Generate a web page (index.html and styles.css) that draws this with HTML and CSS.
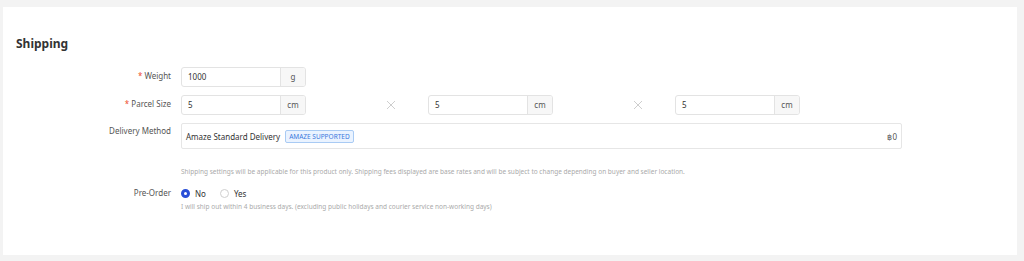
FILE: index.html
```html
<!DOCTYPE html>
<html>
<head>
<meta charset="utf-8">
<link rel="stylesheet" href="styles.css">
</head>
<body>
<div class="card">
  <h2 class="title">Shipping</h2>
  <div class="row">
    <div class="label"><span class="req">*</span> Weight</div>
    <div class="control">
      <div class="input"><span class="value">1000</span><span class="addon">g</span></div>
    </div>
  </div>
  <div class="row">
    <div class="label"><span class="req">*</span> Parcel Size</div>
    <div class="control dims">
      <div class="input"><span class="value">5</span><span class="addon">cm</span></div>
      <svg class="times" viewBox="0 0 10 10" width="10" height="10"><path d="M1 1L9 9M9 1L1 9" stroke="#c8c8c8" stroke-width="0.9" fill="none"/></svg>
      <div class="input"><span class="value">5</span><span class="addon">cm</span></div>
      <svg class="times" viewBox="0 0 10 10" width="10" height="10"><path d="M1 1L9 9M9 1L1 9" stroke="#c8c8c8" stroke-width="0.9" fill="none"/></svg>
      <div class="input"><span class="value">5</span><span class="addon">cm</span></div>
    </div>
  </div>
  <div class="row">
    <div class="label label-top">Delivery Method</div>
    <div class="control">
      <div class="delivery">
        <span class="dname">Amaze Standard Delivery</span>
        <span class="badge">AMAZE SUPPORTED</span>
        <span class="price">฿0</span>
      </div>
    </div>
  </div>
  <div class="row">
    <div class="label"></div>
    <div class="control help">Shipping settings will be applicable for this product only. Shipping fees displayed are base rates and will be subject to change depending on buyer and seller location.</div>
  </div>
  <div class="row preorder">
    <div class="label">Pre-Order</div>
    <div class="control">
      <div class="radios">
        <label class="radio"><span class="dot checked"></span>No</label>
        <label class="radio"><span class="dot"></span>Yes</label>
      </div>
      <div class="note">I will ship out within 4 business days. (excluding public holidays and courier service non-working days)</div>
    </div>
  </div>
</div>
</body>
</html>
```

FILE: styles.css
```css
html, body {
  margin: 0;
  padding: 0;
}
body {
  background: #f3f3f3;
  font-family: "Noto Sans", "Open Sans", sans-serif;
  color: #333;
  width: 1024px;
  height: 261px;
  overflow: hidden;
}
.card {
  background: #fff;
  margin: 7px 7px 0 3px;
  height: 248px;
  box-sizing: border-box;
  padding: 28px 13px 0 13px;
}
.title {
  margin: 0 0 14px 0;
  font-size: 12px;
  line-height: 18px;
  font-weight: 700;
  color: #333;
}
.row {
  display: flex;
  align-items: flex-start;
  margin-bottom: 8px;
}
.label {
  width: 165px;
  flex: none;
  box-sizing: border-box;
  padding-right: 10px;
  text-align: right;
  font-size: 8px;
  line-height: 18px;
  color: #555;
}
.label-top {
  line-height: 16px;
}
.req {
  color: #ee4d2d;
}
.control {
  flex: none;
}
.dims {
  display: flex;
  align-items: center;
}
.times {
  margin: 0 32px 0 80px;
}
.input {
  display: flex;
  width: 125px;
  height: 20px;
  box-sizing: border-box;
  border: 1px solid #e3e3e3;
  border-radius: 3px;
  overflow: hidden;
  font-size: 8px;
  line-height: 18px;
}
.value {
  flex: 1;
  padding-left: 6px;
  color: #333;
}
.addon {
  width: 24px;
  text-align: center;
  background: #f7f7f7;
  border-left: 1px solid #e3e3e3;
  color: #555;
}
.delivery {
  display: flex;
  align-items: center;
  width: 721px;
  height: 26px;
  box-sizing: border-box;
  border: 1px solid #e6e6e6;
  border-radius: 2px;
  padding: 0 4px 0 4px;
  font-size: 8px;
  color: #333;
}
.badge {
  margin-left: 5px;
  font-size: 6.5px;
  line-height: 11px;
  padding: 0 3px;
  color: #3a78dd;
  background: #eaf3ff;
  border: 1px solid #a9cbf4;
  border-radius: 2px;
}
.price {
  margin-left: auto;
  color: #555;
}
.help {
  margin-top: 10px;
  font-size: 6.5px;
  line-height: 10px;
  color: #aaa;
}
.preorder {
  margin-top: 9px;
}
.preorder .label {
  line-height: 14px;
}
.radios {
  display: flex;
  align-items: center;
  height: 14px;
  font-size: 8px;
  color: #333;
}
.radio {
  display: flex;
  align-items: center;
  margin-right: 14px;
}
.dot {
  width: 9px;
  height: 9px;
  box-sizing: border-box;
  border-radius: 50%;
  border: 1px solid #cfcfcf;
  margin-right: 5px;
}
.dot.checked {
  border: 3px solid #2a4fd7;
}
.note {
  margin-top: 1px;
  font-size: 6.5px;
  line-height: 12px;
  color: #aaa;
}
```
